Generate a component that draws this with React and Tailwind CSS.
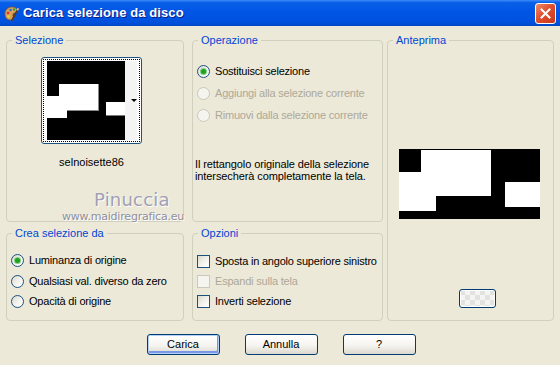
import React from 'react';

const font = "font-['Liberation_Sans',Arial,sans-serif]";

const Radio = ({ checked, disabled }) => (
    <span
        className={`w-[13px] h-[13px] shrink-0 rounded-full border flex items-center justify-center ${
            disabled
                ? 'border-[#CAC8BB] bg-[#F5F4EF]'
                : 'border-[#1C5180] bg-[linear-gradient(135deg,#DCD9CE_0%,#F6F5F1_60%,#FFFFFF_100%)]'
        }`}
    >
        {checked && <span className="w-[5px] h-[5px] rounded-full bg-[#21A121] shadow-[0_0_0_1px_#7FD07F]" />}
    </span>
);

const Check = ({ disabled }) => (
    <span
        className={`w-[13px] h-[13px] shrink-0 border ${
            disabled
                ? 'border-[#CAC8BB] bg-[#F5F4EF]'
                : 'border-[#1C5180] bg-[linear-gradient(135deg,#DCD9CE_0%,#F6F5F1_60%,#FFFFFF_100%)]'
        }`}
    />
);

const Group = ({ label, className, children }) => (
    <div className={`relative border border-[#D0D0BF] rounded-[4px] ${className}`}>
        <span className="absolute -top-[8px] left-[5px] px-[3px] bg-[#ECE9D8] text-[#0046D5] leading-[14px]">
            {label}
        </span>
        {children}
    </div>
);

const Option = ({ children, checked, disabled, kind = 'radio', h = 'h-[21px]' }) => (
    <div className={`flex items-center gap-[5px] whitespace-nowrap tracking-[-0.2px] ${h} ${disabled ? 'text-[#ACA899]' : 'text-black'}`}>
        {kind === 'radio' ? <Radio checked={checked} disabled={disabled} /> : <Check disabled={disabled} />}
        <span>{children}</span>
    </div>
);

const Button = ({ children, isDefault }) => (
    <button
        className={`w-[73px] h-[21px] rounded-[3px] border border-[#003C74] bg-[linear-gradient(180deg,#FFFFFF_0%,#F5F4F0_55%,#DCD8CE_100%)] text-black leading-none ${
            isDefault ? 'shadow-[inset_0_0_0_1px_#B6CFF5,inset_-1px_-2px_0_1px_#7897E6]' : ''
        }`}
    >
        {children}
    </button>
);

const Thumb = () => (
    <svg width="78" height="79" viewBox="0 0 78 79" className="block">
        <rect width="78" height="79" fill="#000" />
        <rect x="12" y="23" width="39" height="26" fill="#fff" />
        <rect x="0" y="35" width="20" height="22" fill="#fff" />
        <rect x="20" y="49" width="31" height="1" fill="#888" />
        <rect x="51" y="23" width="1" height="27" fill="#888" />
        <rect x="59" y="41" width="19" height="13" fill="#fff" />
        <rect x="59" y="54" width="19" height="1" fill="#777" />
    </svg>
);

const Preview = () => (
    <svg width="141" height="70" viewBox="0 0 141 70" className="block">
        <rect width="141" height="70" fill="#000" />
        <rect x="22" y="1" width="70" height="46" fill="#fff" />
        <rect x="0" y="23" width="37" height="39" fill="#fff" />
        <rect x="106" y="33" width="35" height="25" fill="#fff" />
    </svg>
);

const AppIcon = () => (
    <svg width="17" height="17" viewBox="0 0 17 17">
        <path d="M2 9c0-4 3-7 7-7s6 3 5 5c-1 2-3 0-4 2s2 3 0 5c-2 2-8 1-8-5z" fill="#D9A35B" stroke="#8A5A24" strokeWidth="0.8" />
        <circle cx="5" cy="8" r="1.3" fill="#E03020" />
        <circle cx="7.5" cy="5" r="1.3" fill="#2A6EE0" />
        <circle cx="11" cy="4.5" r="1.2" fill="#2EA03A" />
        <circle cx="5.5" cy="11.5" r="1.2" fill="#F0D020" />
        <path d="M9 15l6-11" stroke="#5A3A1A" strokeWidth="1.6" strokeLinecap="round" />
        <path d="M14.2 5.4l1.2-2.2" stroke="#C0C0C0" strokeWidth="1.8" />
    </svg>
);

const App = () => {
    return (
        <div className={`w-[560px] h-[365px] bg-[#ECE9D8] text-[11px] overflow-hidden ${font}`}>
            {/* Title bar */}
            <div className="h-[26px] flex items-center pl-[3px] pr-[4px] bg-[linear-gradient(180deg,#3D8BFA_0%,#0A5FE8_10%,#0055E5_45%,#0052DE_85%,#0046C6_100%)]">
                <AppIcon />
                <span className="ml-[3px] text-white font-bold text-[13px] [text-shadow:1px_1px_0_#0A1E8C] tracking-[0.1px]">
                    Carica selezione da disco
                </span>
                <div className="ml-auto w-[21px] h-[21px] rounded-[3px] border border-white bg-[linear-gradient(135deg,#F08A6A_0%,#E0502F_45%,#C83818_100%)] flex items-center justify-center">
                    <svg width="11" height="11" viewBox="0 0 11 11">
                        <path d="M1.5 1.5l8 8M9.5 1.5l-8 8" stroke="#fff" strokeWidth="2" strokeLinecap="square" />
                    </svg>
                </div>
            </div>

            {/* Groups */}
            <div className="flex pl-[6px] pt-[14px]">
                <div className="w-[178px] flex flex-col gap-[11px]">
                    <Group label="Selezione" className="h-[182px]">
                        <div className="pl-[34px] pt-[16px]">
                            <div className="w-[101px] h-[87px] border border-[#1C5180] rounded-[3px] bg-white p-[1px]">
                                <div className="h-full border border-dotted border-black flex pl-[3px] pt-[1px]">
                                    <Thumb />
                                    <div className="relative w-[12px] h-[79px] bg-[#F4F4F4]">
                                        <span className="absolute left-[6px] top-[38px] w-0 h-0 border-l-[3px] border-r-[3px] border-t-[3px] border-l-transparent border-r-transparent border-t-black" />
                                    </div>
                                </div>
                            </div>
                        </div>
                        <div className="text-center pr-[7px] mt-[10px] text-black">selnoisette86</div>
                        <div className="mt-[20px] pl-[87px] text-[18px] leading-[17px] text-[#A0A0B6] [text-shadow:1px_1px_0_#FFFFFF] font-['DejaVu_Sans',sans-serif] tracking-[0.2px]">
                            Pinuccia
                        </div>
                        <div className="mt-[3px] pl-[55px] text-[11px] leading-[12px] text-[#8E8E9E] [text-shadow:1px_1px_0_#FFFFFF] font-['DejaVu_Sans',sans-serif] tracking-[-0.2px]">
                            www.maidiregrafica.eu
                        </div>
                    </Group>
                    <Group label="Crea selezione da" className="h-[88px]">
                        <div className="pl-[4px] pt-[16px] flex flex-col">
                            <Option checked h="h-[21px]">Luminanza di origine</Option>
                            <Option h="h-[20px]">Qualsiasi val. diverso da zero</Option>
                            <Option h="h-[20px]">Opacità di origine</Option>
                        </div>
                    </Group>
                </div>

                <div className="ml-[8px] w-[191px] flex flex-col gap-[11px]">
                    <Group label="Operazione" className="h-[182px]">
                        <div className="pl-[4px] pt-[19px] flex flex-col">
                            <Option checked h="h-[22px]">Sostituisci selezione</Option>
                            <Option disabled h="h-[22px]">Aggiungi alla selezione corrente</Option>
                            <Option disabled h="h-[22px]">Rimuovi dalla selezione corrente</Option>
                        </div>
                        <p className="pl-[2px] mt-[32px] leading-[12px] text-black tracking-[-0.1px]">
                            Il rettangolo originale della selezione
                            <br />
                            intersecherà completamente la tela.
                        </p>
                    </Group>
                    <Group label="Opzioni" className="h-[88px]">
                        <div className="pl-[4px] pt-[17px] flex flex-col">
                            <Option kind="check" h="h-[20px]">Sposta in angolo superiore sinistro</Option>
                            <Option kind="check" disabled h="h-[20px]">Espandi sulla tela</Option>
                            <Option kind="check" h="h-[20px]">Inverti selezione</Option>
                        </div>
                    </Group>
                </div>

                <div className="ml-[4px] w-[167px]">
                    <Group label="Anteprima" className="h-[281px]">
                        <div className="pl-[11px] pt-[108px]">
                            <Preview />
                        </div>
                        <div className="pl-[71px] mt-[70px]">
                            <div className="w-[37px] h-[19px] rounded-[3px] border border-[#003C74] bg-[repeating-conic-gradient(#F4F4F2_0%_25%,#E2E2DE_0%_50%)] bg-[length:10px_10px] shadow-[inset_0_0_0_1px_#FFFFFF]" />
                        </div>
                    </Group>
                </div>
            </div>

            {/* Buttons */}
            <div className="flex justify-center gap-[25px] mt-[13px] pl-[2px]">
                <Button isDefault>Carica</Button>
                <Button>Annulla</Button>
                <Button>?</Button>
            </div>
        </div>
    );
};

export default App;
